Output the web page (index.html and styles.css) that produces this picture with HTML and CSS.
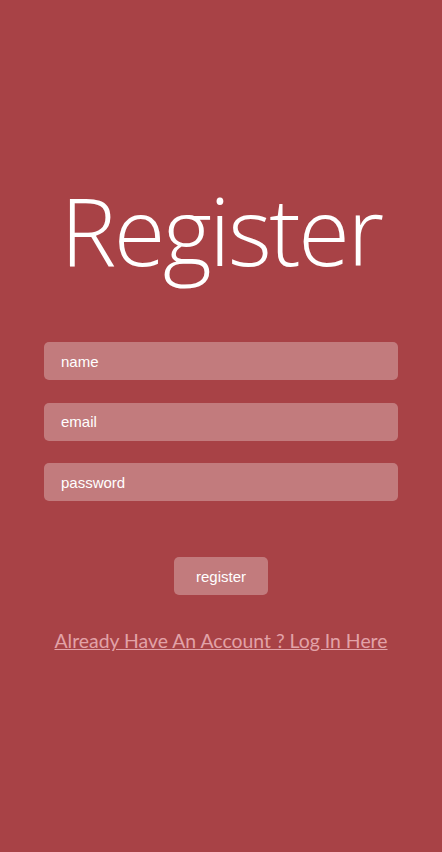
FILE: index.html
```html
<!DOCTYPE html>
<html>
<head>
<meta charset="utf-8">
<link rel="stylesheet" href="styles.css">
</head>
<body>
<main class="page">
  <h1 class="title">Register</h1>
  <form class="form">
    <input class="field" type="text" placeholder="name">
    <input class="field" type="email" placeholder="email">
    <input class="field" type="password" placeholder="password">
    <button class="btn" type="button">register</button>
  </form>
  <a class="link" href="#">Already Have An Account ? Log In Here</a>
</main>
</body>
</html>
```
FILE: styles.css
```css
* { box-sizing: border-box; }
html, body { margin: 0; padding: 0; }
body {
  background: #a84246;
  min-height: 852px;
  font-family: "Liberation Sans", Arial, sans-serif;
}
.page {
  display: flex;
  flex-direction: column;
  align-items: center;
  padding-top: 170px;
}
.title {
  margin: 0;
  font-family: "Open Sans", sans-serif;
  font-weight: 300;
  font-size: 94px;
  line-height: 120px;
  color: #fff;
  letter-spacing: -2.5px;
}
.form {
  display: flex;
  flex-direction: column;
  align-items: center;
  gap: 22.5px;
  margin-top: 52px;
  width: 100%;
}
.field {
  width: 354px;
  height: 38px;
  border: none;
  border-radius: 5px;
  background: rgba(255,255,255,0.3);
  padding: 0 17px;
  font-family: "Liberation Sans", Arial, sans-serif;
  font-size: 15px;
  color: #fff;
  outline: none;
}
.field::placeholder { color: #fff; opacity: 1; }
.btn {
  margin-top: 33.5px;
  width: 94px;
  height: 38px;
  border: none;
  border-radius: 5px;
  background: rgba(255,255,255,0.3);
  color: #fff;
  font-family: "Liberation Sans", Arial, sans-serif;
  font-size: 15px;
}
.link {
  margin-top: 34px;
  font-family: "Lato", sans-serif;
  font-size: 19.4px;
  color: #e2a2a8;
  text-decoration: underline;
}
```
